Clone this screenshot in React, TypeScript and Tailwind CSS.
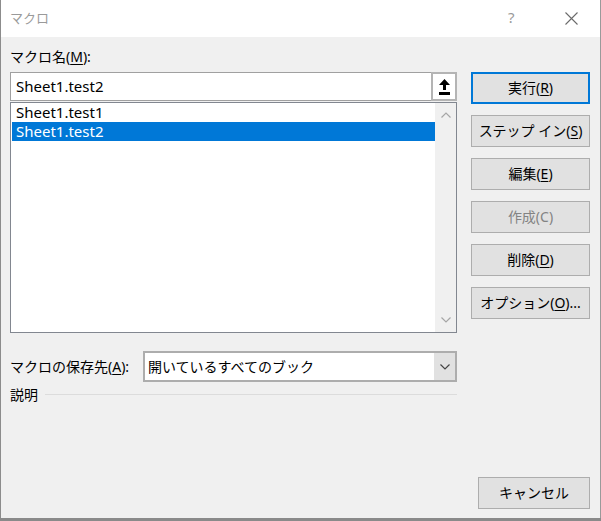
import React from "react";

const FONT = { fontFamily: '"Noto Sans", "Noto Sans CJK JP", sans-serif' };
const LATIN = { fontFamily: '"Noto Sans", "Noto Sans CJK JP", sans-serif' };

function Btn({ children, disabled, primary, className = "" }: { children: React.ReactNode; disabled?: boolean; primary?: boolean; className?: string }) {
  return (
    <div
      className={`h-[32px] flex items-center justify-center bg-[#e1e1e1] text-[14px] leading-none ${
        primary ? "border-2 border-[#0078d7]" : "border border-[#adadad]"
      } ${disabled ? "text-[#838383]" : "text-black"} ${className}`}
    >
      {children}
    </div>
  );
}

function U({ children }: { children: React.ReactNode }) {
  return <span className="underline underline-offset-2">{children}</span>;
}

function Chevron({ up, color = "#a6a6a6" }: { up?: boolean; color?: string }) {
  return (
    <svg width="10" height="6" viewBox="0 0 10 6">
      <path d={up ? "M0.5 5.5 L5 1 L9.5 5.5" : "M0.5 0.5 L5 5 L9.5 0.5"} fill="none" stroke={color} strokeWidth="1.2" />
    </svg>
  );
}

export default function App() {
  return (
    <div className="w-[601px] h-[521px] flex flex-col bg-[#8a8a8a]" style={FONT}>
      <div className="flex-1 flex flex-col border-l border-[#8c8c8c] border-r border-r-[#9a9a9a] mb-[3px]">
        {/* Title bar */}
        <div className="h-[37px] bg-white flex items-center relative">
          <span className="ml-[9px] text-[13px] text-[#9a9a9a] leading-none">マクロ</span>
          <span className="absolute left-[507px] top-[10px] text-[15px] text-[#9a9a9a] leading-none" style={LATIN}>?</span>
          <svg className="absolute left-[564px] top-[12px]" width="13" height="13" viewBox="0 0 13 13">
            <path d="M0.5 0.5 L12.5 12.5 M12.5 0.5 L0.5 12.5" stroke="#6a6a6a" strokeWidth="1.1" />
          </svg>
        </div>
        {/* Body */}
        <div className="flex-1 bg-[#f0f0f0] flex flex-row pl-[9px] pr-[9px]">
          {/* Left column */}
          <div className="w-[447px] flex flex-col">
            <div className="h-[35px] flex items-center pt-[4px] text-[14px] leading-none text-black">
              マクロ名(<U>M</U>):
            </div>
            <div className="h-[29px] bg-white border border-[#a0a0a0] flex flex-row items-stretch">
              <div className="flex-1 flex items-center pl-[5px] text-[15px] leading-none" style={LATIN}>
                Sheet1.test2
              </div>
              <div className="w-[26px] border-2 border-[#b4b4b4] bg-white flex items-center justify-center -mr-[1px] -my-[1px]">
                <svg width="11" height="16" viewBox="0 0 11 16">
                  <path d="M5.5 0 L11 6 L7 6 L7 11 L4 11 L4 6 L0 6 Z" fill="#000" />
                  <rect x="0" y="13" width="11" height="3" fill="#000" />
                </svg>
              </div>
            </div>
            <div className="mt-[1px] h-[231px] bg-white border border-[#828790] flex flex-row">
              <div className="flex-1 pl-[1px] pt-[0px] flex flex-col">
                <div className="h-[19px] flex items-center pl-[4px] text-[15px] leading-none text-black" style={LATIN}>
                  Sheet1.test1
                </div>
                <div className="h-[19px] flex items-center pl-[4px] text-[15px] leading-none text-white bg-[#0078d7]" style={LATIN}>
                  Sheet1.test2
                </div>
              </div>
              <div className="w-[21px] bg-[#f0f0f0] flex flex-col items-center justify-between pt-[9px] pb-[9px]">
                <Chevron up />
                <Chevron />
              </div>
            </div>
            <div className="mt-[18px] flex flex-row items-center">
              <div className="w-[133px] text-[14px] leading-none text-black">
                マクロの保存先(<U>A</U>):
              </div>
              <div className="w-[314px] h-[31px] border-2 border-[#adadad] bg-white flex flex-row">
                <div className="flex-1 flex items-center pl-[3px] text-[14px] leading-none text-black">
                  開いているすべてのブック
                </div>
                <div className="w-[21px] bg-[#e1e1e1] flex items-center justify-center">
                  <Chevron color="#444" />
                </div>
              </div>
            </div>
            <div className="mt-[6px] flex flex-row items-center">
              <span className="text-[14px] leading-none text-black">説明</span>
              <div className="flex-1 ml-[7px] h-px bg-[#dcdcdc] mt-[-2px]" />
            </div>
          </div>
          {/* Right column */}
          <div className="ml-[14px] w-[119px] flex flex-col pt-[35px] pb-[9px]">
            <div className="flex flex-col gap-[11px]">
              <Btn primary>
                実行(<U>R</U>)
              </Btn>
              <Btn>
                ステップ イン(<U>S</U>)
              </Btn>
              <Btn>
                編集(<U>E</U>)
              </Btn>
              <Btn disabled>作成(C)</Btn>
              <Btn>
                削除(<U>D</U>)
              </Btn>
              <Btn>
                オプション(<U>O</U>)...
              </Btn>
            </div>
            <Btn className="mt-auto w-[112px] self-end">キャンセル</Btn>
          </div>
        </div>
      </div>
    </div>
  );
}
